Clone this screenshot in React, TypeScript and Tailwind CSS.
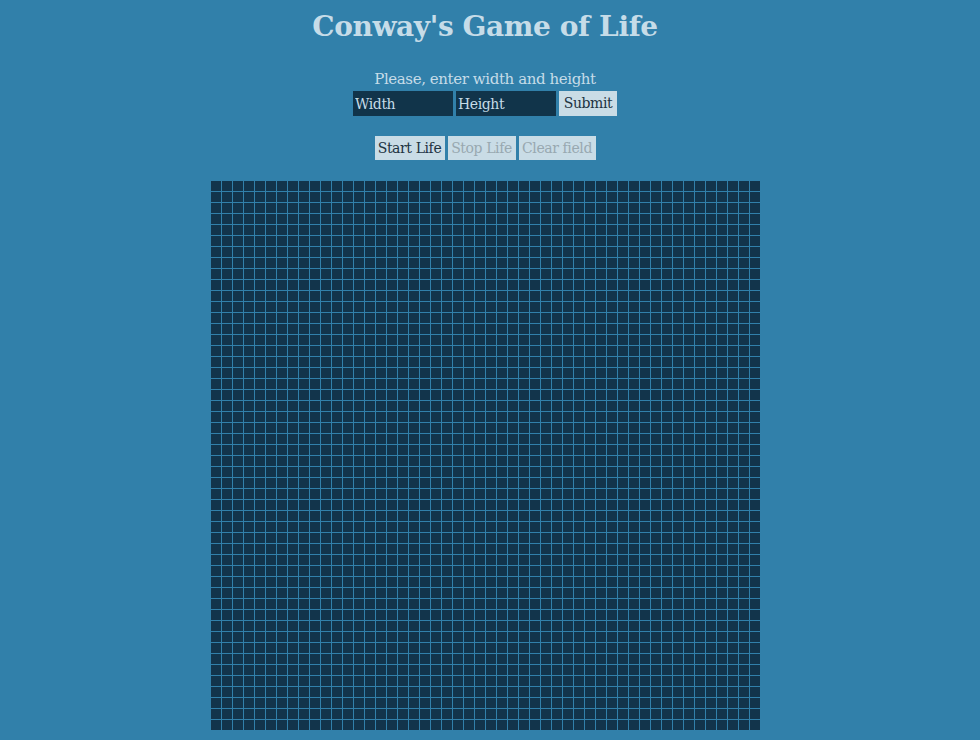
import { useState } from 'react';

const SIZE = 50;

export default function App() {
  const [cells, setCells] = useState<boolean[]>(() => Array(SIZE * SIZE).fill(false));

  const toggle = (i: number) => {
    setCells(prev => prev.map((c, j) => (j === i ? !c : c)));
  };

  return (
    <main className="min-h-screen bg-[#3180aa] text-[#c6dce8] font-['DejaVu_Serif',serif] flex flex-col items-center pr-[10px]">
      <h1 className="text-[28px] font-bold leading-none mt-[13px] tracking-[-0.4px]">Conway's Game of Life</h1>

      <p className="text-[15px] leading-none mt-[31px] tracking-[-0.4px]">Please, enter width and height</p>
      <form className="flex gap-[3px] mt-[4px] text-[14px]" onSubmit={e => e.preventDefault()}>
        <input
          placeholder="Width"
          className="w-[100px] h-[25px] px-[2px] bg-[#11344a] text-[#c6dce8] placeholder:text-[#c6dce8] outline-none tracking-[-0.4px]"
        />
        <input
          placeholder="Height"
          className="w-[100px] h-[25px] px-[2px] bg-[#11344a] text-[#c6dce8] placeholder:text-[#c6dce8] outline-none tracking-[-0.4px]"
        />
        <button type="submit" className="w-[58px] h-[25px] bg-[#c9dce6] text-[#1d3342] tracking-[-0.4px]">Submit</button>
      </form>

      <div className="flex gap-[3px] mt-[20px] text-[14px] tracking-[-0.4px]">
        <button className="w-[70px] h-[24px] bg-[#c9dce6] text-[#1d3342]">Start Life</button>
        <button disabled className="w-[68px] h-[24px] bg-[#c9dce6] text-[#98a8b0]">Stop Life</button>
        <button disabled className="w-[77px] h-[24px] bg-[#c9dce6] text-[#98a8b0]">Clear field</button>
      </div>

      <div className="grid grid-cols-[repeat(50,10px)] gap-px mt-[21px]">
        {cells.map((alive, i) => (
          <div
            key={i}
            onClick={() => toggle(i)}
            className={alive ? 'w-[10px] h-[10px] bg-[#c9dce6]' : 'w-[10px] h-[10px] bg-[#12344b]'}
          />
        ))}
      </div>
    </main>
  );
}
